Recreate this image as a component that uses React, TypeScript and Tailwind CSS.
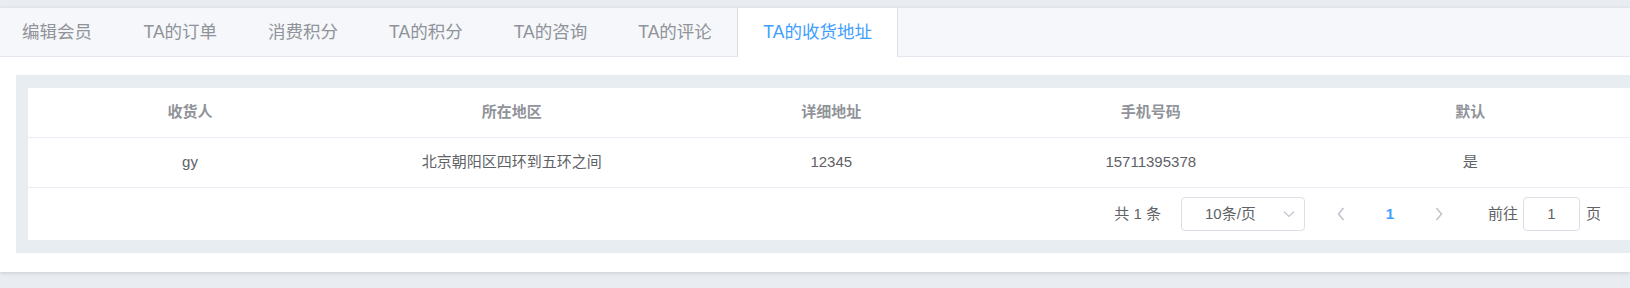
import React from "react";

const tabs = ["编辑会员", "TA的订单", "消费积分", "TA的积分", "TA的咨询", "TA的评论", "TA的收货地址"];

const columns = ["收货人", "所在地区", "详细地址", "手机号码", "默认"];

const rows = [["gy", "北京朝阳区四环到五环之间", "12345", "15711395378", "是"]];

function Chevron({ dir }: { dir: "left" | "right" | "down" }): React.ReactElement {
  if (dir === "down") {
    return (
      <svg width="12" height="8" viewBox="0 0 12 8" fill="none">
        <path d="M1 1.5 6 6.5 11 1.5" stroke="#c0c4cc" strokeWidth="1.2" />
      </svg>
    );
  }
  return (
    <svg width="8" height="14" viewBox="0 0 8 14" fill="none">
      <path
        d={dir === "left" ? "M6.5 1 1.5 7 6.5 13" : "M1.5 1 6.5 7 1.5 13"}
        stroke="#c0c4cc"
        strokeWidth="1.6"
      />
    </svg>
  );
}

export default function App(): React.ReactElement {
  const [active, setActive] = React.useState(6);

  return (
    <div className="h-[288px] overflow-hidden bg-[#e9edf1] pt-2 font-['Liberation_Sans','Noto_Sans_CJK_SC',sans-serif]">
      <div className="bg-white shadow-[0_1px_4px_rgba(0,0,0,0.14)]">
        <div className="flex h-[49px] border-b border-[#e4e7ed] bg-[#f5f7fa]">
          {tabs.map((t, i) => (
            <button
              key={t}
              onClick={() => setActive(i)}
              className={
                i === active
                  ? "-mb-px flex h-[49px] items-center border-x border-[#dcdfe6] bg-white px-[25px] text-[17.5px] text-[#409eff]"
                  : i === 0
                    ? "flex h-[48px] items-center border-x border-transparent pl-[21px] pr-[25px] text-[17.5px] text-[#909399]"
                    : "flex h-[48px] items-center border-x border-transparent px-[24.5px] text-[17.5px] text-[#909399]"
              }
            >
              {t}
            </button>
          ))}
        </div>

        <div className="pb-[19px] pl-4 pt-[18px]">
          <div className="bg-[#e8edf1] py-[13px] pl-3">
            <div className="bg-white text-[15px]">
              <div className="grid h-[50px] grid-cols-[324px_1fr_1fr_1fr_1fr] border-b border-[#ebeef5]">
                {columns.map((c) => (
                  <div key={c} className="flex items-center justify-center font-bold text-[#909399]">
                    {c}
                  </div>
                ))}
              </div>
              {rows.map((r) => (
                <div key={r[3]} className="grid h-[50px] grid-cols-[324px_1fr_1fr_1fr_1fr] border-b border-[#ebeef5]">
                  {r.map((v, j) => (
                    <div key={j} className="flex items-center justify-center text-[#606266]">
                      {v}
                    </div>
                  ))}
                </div>
              ))}

              <div className="flex h-[52px] items-center justify-end pr-[29px] text-[15px] text-[#606266]">
                <span>共 1 条</span>
                <div className="ml-5 flex h-[34px] w-[124px] items-center justify-between rounded border border-[#dcdfe6] pl-[23px] pr-[9px]">
                  <span>10条/页</span>
                  <Chevron dir="down" />
                </div>
                <div className="ml-[14px] flex w-[44px] justify-center">
                  <Chevron dir="left" />
                </div>
                <div className="flex w-[54px] justify-center font-bold text-[#409eff]">1</div>
                <div className="flex w-[44px] justify-center">
                  <Chevron dir="right" />
                </div>
                <span className="ml-[27px]">前往</span>
                <div className="ml-[5px] flex h-[34px] w-[57px] items-center justify-center rounded border border-[#dcdfe6]">
                  1
                </div>
                <span className="ml-[6px]">页</span>
              </div>
            </div>
          </div>
        </div>
      </div>
    </div>
  );
}
